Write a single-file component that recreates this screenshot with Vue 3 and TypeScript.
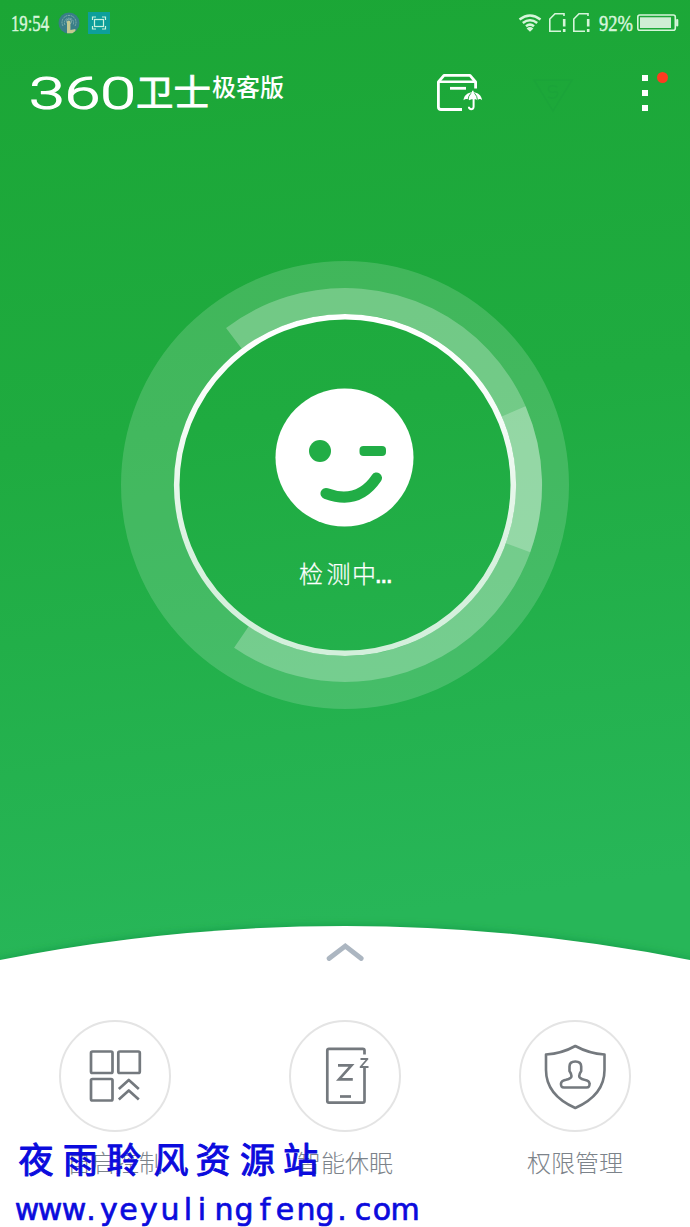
<script setup lang="ts">
interface Tool { id: string; label: string }
const tools: Tool[] = [
  { id: 'autostart', label: '自启控制' },
  { id: 'sleep', label: '智能休眠' },
  { id: 'permission', label: '权限管理' },
]
</script>

<template>
  <main class="screen">
    <div class="status">
      <svg class="clock" width="42" height="30"><text x="1" y="23" textLength="38" lengthAdjust="spacingAndGlyphs">19:54</text></svg>
      <svg class="touch" width="22" height="22" viewBox="0 0 22 22">
        <circle cx="11" cy="11" r="10.5" fill="#397e88" />
        <g fill="none" stroke="#8fb7b0" stroke-width=".8">
          <path d="M5 14a7 7 0 1 1 12 0M7 13a4.6 4.6 0 1 1 8 0" stroke-dasharray="2 .7" />
          <circle cx="11" cy="9.5" r="2.5" />
        </g>
        <path d="M9 9.500q1.800-2 3.400 0V18l5-1v2l-3 2.300H9z" fill="#c5ca91" />
      </svg>
      <svg class="capture" width="22" height="22" viewBox="0 0 22 22">
        <rect width="22" height="22" fill="#0d9f9b" />
        <g fill="none" stroke="#c9f2dc" stroke-width="1.2">
          <path d="M4.500 8V5H8M14 5h3.500v3M17.500 14v3H14M8 17H4.500v-3" />
          <rect x="6.500" y="7.500" width="9" height="7" />
        </g>
      </svg>
      <svg class="signals" width="74" height="24" viewBox="0 0 74 24">
        <g fill="none" stroke="#d6f5da" stroke-width="2.500">
          <path d="M1.500 8.500Q12 .5 22.500 8.500M4.800 12Q12 6.500 19.200 12M8 15.300Q12 12 16 15.300" />
        </g>
        <path d="M8.600 17.400Q12 14.800 15.400 17.400L12 20.700z" fill="#d6f5da" />
        <g v-for="x in [31, 55]" :key="x" :transform="`translate(${x} 0)`" fill="none" stroke="#d6f5da" stroke-width="1.600">
          <path d="M15 5V2.800H6L.8 8v12.200H12" />
          <path d="M15.200 8v7.500M15.200 18v3" stroke-width="2.600" />
        </g>
      </svg>
      <svg class="level" width="36" height="30"><text x="0" y="23" textLength="34" lengthAdjust="spacingAndGlyphs">92%</text></svg>
      <svg class="battery" width="43" height="18" viewBox="0 0 43 18">
        <rect x=".8" y="1" width="37.500" height="15.200" rx="2" fill="none" stroke="#d6f5da" stroke-width="1.600" />
        <rect x="3" y="3.300" width="31" height="10.700" fill="#d0edd5" />
        <path d="M40.200 6v5.500" stroke="#d6f5da" stroke-width="2.200" stroke-linecap="round" />
      </svg>
    </div>

    <header class="header">
      <svg class="brand" width="260" height="50" viewBox="0 0 260 50">
        <text x="0" y="40.500" class="digits" textLength="107" lengthAdjust="spacingAndGlyphs">360</text>
        <text x="107" y="38" class="name" textLength="75" lengthAdjust="spacingAndGlyphs">卫士</text>
        <text x="183" y="27.500" class="edition">极客版</text>
      </svg>
      <svg class="box" width="48" height="40" viewBox="0 0 48 40">
        <g fill="none" stroke="#fff" stroke-width="2.800" stroke-linejoin="round">
          <path d="M26 36.500H5Q2.400 36.500 2.400 34V9L8 2.400h26L39.600 9v6.500" />
          <path d="M3 8.700h36" stroke-width="2.400" />
          <path d="M14 15.300h16" />
        </g>
        <path d="M27.500 27.200C28 22 32 19.500 36 19.200v-1.400h1.600v1.400c4 .3 8 3 8.500 8-1.600-1.500-3-1.500-4.600.1-1.300-1-2-1.200-2.900-1v7.500c0 4.800-7 4.500-6.700 0h2c0 1.800 2.700 2 2.700 0v-7.500c-1.300-.2-2 .2-3 1-1.600-1.500-4-1.700-6.100-.1z" fill="#fff" />
        <path d="M32 27q.2-4 3-6.800M41.500 27q-.2-4-3-6.800" fill="none" stroke="#1fa73a" stroke-width=".9" />
      </svg>
      <svg class="ghost" width="42" height="34" viewBox="0 0 42 34">
        <path d="M2 2h38L21 33z" fill="none" stroke="#1a9f3b" stroke-width="1.600" />
        <path d="M25.500 9Q17 6 16.500 10.500T22 14T24.500 18.500Q22 21.500 16 19" fill="none" stroke="#1a9f3b" stroke-width="1.600" />
      </svg>
      <button class="more" aria-label="menu"><i /><i /><i /><b class="badge" /></button>
    </header>

    <section class="scan">
      <svg width="450" height="450" viewBox="120 260 450 450">
        <defs>
          <linearGradient id="ring" x1="0" y1="0" x2="0" y2="1">
            <stop offset="0" stop-color="#fff" />
            <stop offset=".3" stop-color="#fff" stop-opacity=".96" />
            <stop offset=".7" stop-color="#fff" stop-opacity=".83" />
            <stop offset="1" stop-color="#fff" stop-opacity=".8" />
          </linearGradient>
        </defs>
        <g fill="none" stroke="#fff">
          <circle cx="345" cy="485" r="197.500" stroke-width="53" stroke-opacity=".155" />
          <path d="M233.900 338.400A184 184 0 1 1 241.400 637" stroke-width="26" stroke-opacity=".26" />
          <path d="M513.600 411.400A184 184 0 0 1 518 547.700" stroke-width="26" stroke-opacity=".24" />
          <circle cx="345" cy="485" r="168.300" stroke="url(#ring)" stroke-width="5.600" />
        </g>
        <circle cx="344.500" cy="457.500" r="69" fill="#fff" />
        <g fill="#21ad46">
          <circle cx="320" cy="451" r="11" />
          <rect x="359.500" y="446" width="26.500" height="10" rx="4" />
          <path d="M326 493.500C345 500.500 363 498 376.500 478" fill="none" stroke="#21ad46" stroke-width="11" stroke-linecap="round" />
        </g>
        <text class="state" y="582.500"><tspan x="299">检</tspan><tspan x="326.500">测</tspan><tspan x="352">中</tspan></text>
        <text class="state dots" x="375.500" y="582.500">...</text>
      </svg>
    </section>

    <section class="sheet">
      <svg class="curve" width="690" height="56" viewBox="0 0 690 56">
        <defs><filter id="soft" x="-5%" y="-30%" width="110%" height="160%"><feGaussianBlur stdDeviation="4" /></filter></defs>
        <path d="M-20 58A1767 1767 0 0 1 710 58" fill="#178238" fill-opacity=".55" filter="url(#soft)" />
        <path d="M0 54A1767 1767 0 0 1 690 54V56H0z" fill="#fff" />
      </svg>
      <div class="panel">
        <svg class="chevron" width="40" height="20" viewBox="0 0 40 20">
          <path d="M4 16.500 20.300 4l16 12.500" fill="none" stroke="#acb6c1" stroke-width="4.800" stroke-linecap="round" stroke-linejoin="miter" />
        </svg>
        <nav class="tools">
          <div v-for="t in tools" :key="t.id" class="tool">
            <span class="disc">
              <svg width="108" height="108" viewBox="0 0 108 108">
                <g v-if="t.id === 'autostart'" fill="none" stroke="#74797e" stroke-width="2.700" stroke-linecap="round" stroke-linejoin="round">
                  <rect x="30" y="29.500" width="21.500" height="21.500" rx="1.500" />
                  <rect x="57.300" y="29.500" width="21.500" height="21.500" rx="1.500" />
                  <rect x="30" y="57" width="21.500" height="21.500" rx="1.500" />
                  <path d="M57.800 67 67.800 58l10 9M57.800 77.500 67.800 68.500l10 9" stroke-linecap="butt" />
                </g>
                <g v-else-if="t.id === 'sleep'" fill="none" stroke="#74797e" stroke-width="2.700" stroke-linejoin="round">
                  <path d="M73.500 32.500V28.500Q73.500 26.800 71.800 26.800H38Q36.300 26.800 36.300 28.500V79Q36.300 80.700 38 80.700H71.800Q73.500 80.700 73.500 79V46" />
                  <path d="M47 43.300H60.500L48 57.300H61.800" stroke-linejoin="miter" />
                  <path d="M49 74.500h11" />
                  <path d="M69.500 37h7l-7 8h8" stroke-width="1.800" />
                </g>
                <g v-else fill="none" stroke="#74797e" stroke-width="2.600" stroke-linejoin="round">
                  <path d="M54.300 24Q68 31.500 83.500 32.500V48Q83.500 73 54.300 86Q25 73 25 48V32.500Q41 31.500 54.300 24z" />
                  <path d="M43 65.500Q39.500 65.500 40 61.500Q40.300 58.800 45 57.800Q50.500 56.500 50.500 54Q50.500 52 48.500 49V44.500Q48.500 39.500 54.300 39.500T60.200 44.500V49Q58.200 52 58.200 54Q58.200 56.500 63.500 57.800Q68.300 58.800 68.500 61.500Q69 65.500 65.500 65.500z" />
                </g>
              </svg>
            </span>
            <span class="label">{{ t.label }}</span>
          </div>
        </nav>
      </div>
    </section>

    <svg class="watermark" width="440" height="97" viewBox="0 1130 440 97">
      <text class="site" x="36 80.500 124 171 213 257.500 300.500" y="1173">夜雨聆风资源站</text>
      <text class="url" x="27 50 74 91 109 128.500 149 170 188 202 224 244 265 285 306 325 342 363 382 405" y="1220">www.yeyulingfeng.com</text>
    </svg>
  </main>
</template>

<style>
body { margin: 0; }
</style>

<style scoped>
.screen {
  position: relative;
  width: 690px;
  height: 1227px;
  overflow: hidden;
  display: flex;
  flex-direction: column;
  background: linear-gradient(172deg, #28b75b 0, #28b75b 0);
  background: linear-gradient(172deg, #1ba635 0, #1fab40 450px, #27b658 960px);
  font-family: "Liberation Sans", "Noto Sans CJK SC", sans-serif;
}
svg { display: block; flex: none; overflow: visible; }
.status { height: 46px; display: flex; align-items: center; padding-left: 10px; box-sizing: border-box; }
.clock text, .level text { font: 24px "Liberation Serif", serif; fill: #d6f5da; stroke: #d6f5da; stroke-width: .5; }
.touch { margin-left: 6px; }
.capture { margin-left: 8px; }
.signals { margin-left: 408px; }
.level { margin-left: 7px; }
.battery { margin-left: 2px; }
.header { height: 94px; display: flex; align-items: flex-start; }
.brand { margin: 22px 0 0 29px; fill: #fff; }
.digits { font: 300 44px Roboto, sans-serif; stroke: #fff; stroke-width: 1.1; }
.name { font: 400 36px "Noto Sans CJK SC", sans-serif; stroke: #fff; stroke-width: .8; }
.edition { font: 500 24px "Noto Sans CJK SC", sans-serif; }
.box { margin: 27px 0 0 147px; }
.ghost { margin: 32px 0 0 48px; opacity: .4; }
.more { position: relative; margin: 29px 0 0 67.5px; padding: 0; border: 0; background: none; width: 7px; height: 36px; display: flex; flex-direction: column; justify-content: space-between; }
.more i { width: 6px; height: 6px; background: #fff; }
.badge { position: absolute; left: 15px; top: -3px; width: 11px; height: 11px; border-radius: 50%; background: #fd3b20; }
.scan { height: 766px; display: flex; justify-content: center; padding-top: 120px; box-sizing: border-box; }
.state { font: 300 24px "Noto Sans CJK SC", sans-serif; fill: #fff; stroke: #fff; stroke-width: .25; }
.dots { font: 700 20px "Liberation Sans", sans-serif; }
.sheet { height: 321px; display: flex; flex-direction: column; }
.panel { flex: 1; background: #fff; display: flex; flex-direction: column; align-items: center; }
.chevron { position: relative; top: -20px; margin-bottom: -20px; }
.tools { width: 690px; display: grid; grid-template-columns: repeat(3, 1fr); margin-top: 58px; }
.tool { display: flex; flex-direction: column; align-items: center; }
.disc { width: 108px; height: 108px; border: 2px solid #e4e4e4; border-radius: 50%; }
.label { margin-top: 13px; height: 34px; font: 300 24px/34px "Noto Sans CJK SC", sans-serif; color: #7c838a; }
.watermark { position: absolute; left: 0; bottom: 0; fill: #0b0bdd; text-anchor: middle; stroke: #0b0bdd; stroke-linejoin: round; }
.site { font: 400 35px "Noto Sans CJK SC", sans-serif; stroke-width: 1; }
.url { font: 30px "DejaVu Sans", sans-serif; stroke-width: .7; }
</style>
